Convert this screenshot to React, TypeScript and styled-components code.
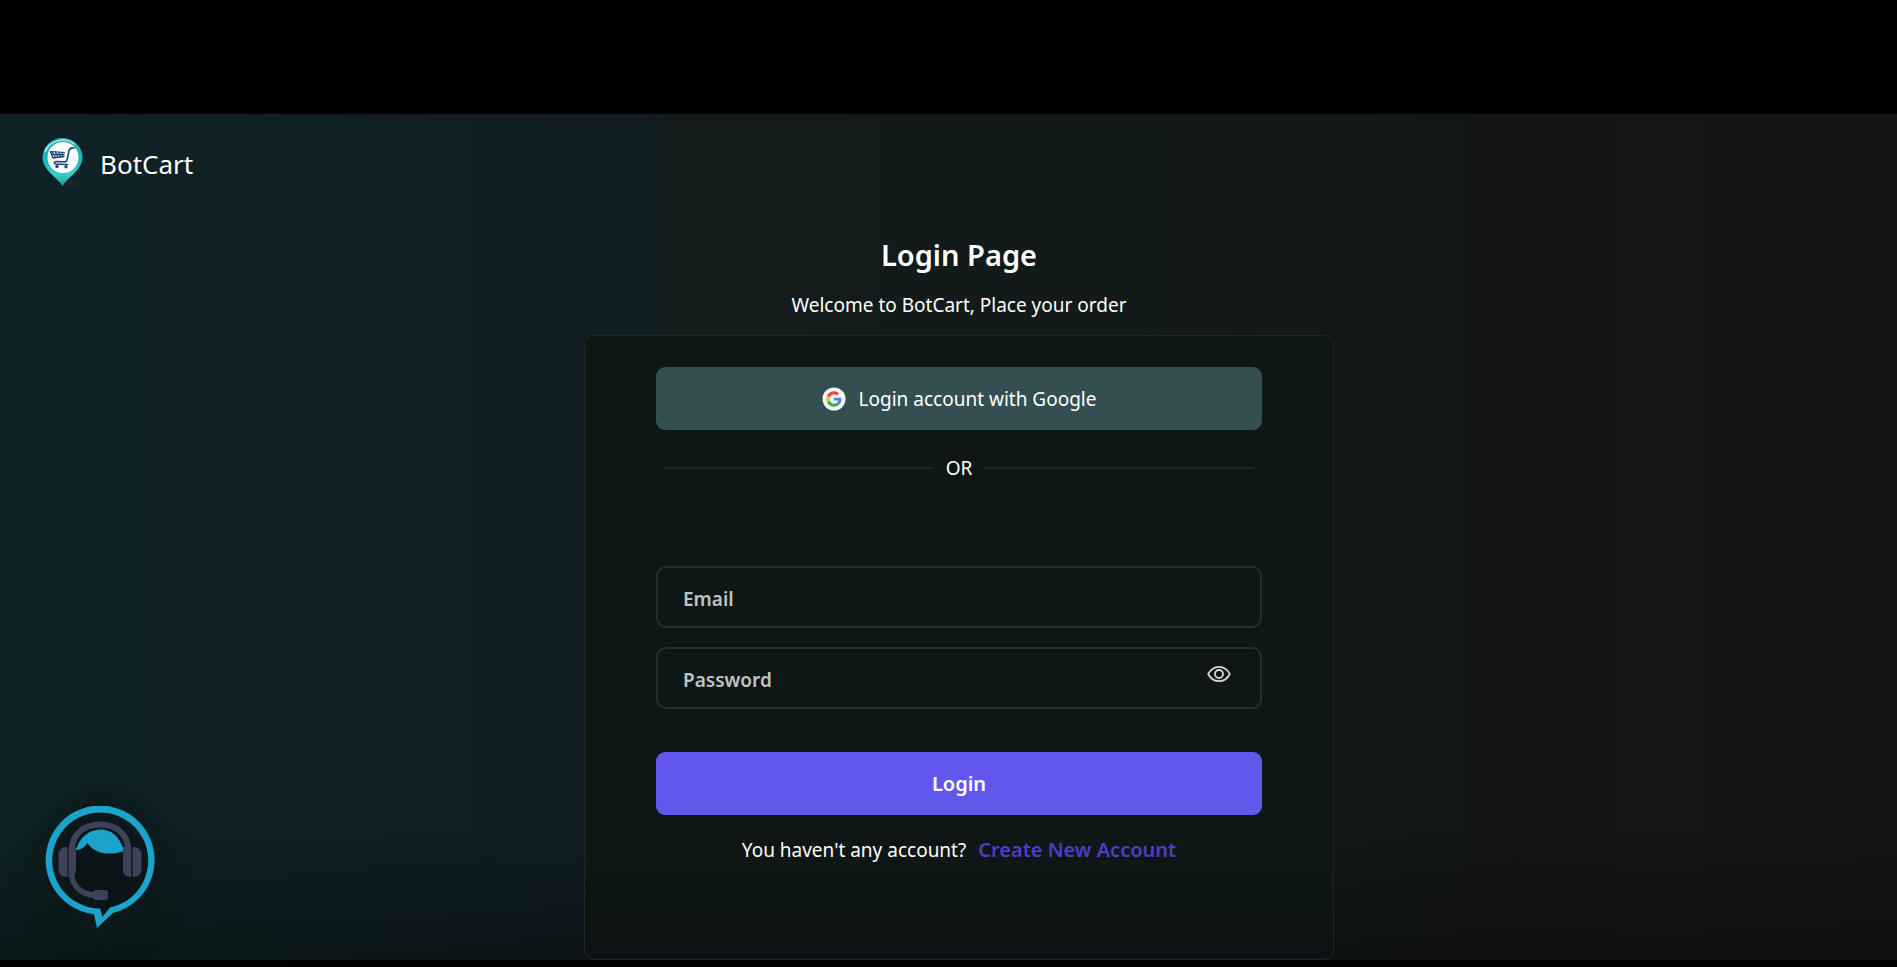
import React, { useState } from "react";
import styled, { createGlobalStyle } from "styled-components";

const GlobalStyle = createGlobalStyle`
  *, *::before, *::after { box-sizing: border-box; }
  body {
    margin: 0;
    background: #000;
    color: #fff;
    font-family: "Noto Sans", "Open Sans", sans-serif;
    font-size: 19px;
    line-height: 28px;
  }
  button, input { font: inherit; color: inherit; }
`;

const Frame = styled.div`
  display: flex;
  flex-direction: column;
  min-height: 100vh;
  padding: 114px 0 7px;
  background: #000;
`;

const Screen = styled.div`
  position: relative;
  flex: 1;
  display: flex;
  flex-direction: column;
  background:
    linear-gradient(to bottom, rgba(0, 0, 0, 0) 84%, rgba(0, 0, 0, 0.3) 100%),
    linear-gradient(to right, #0e2225 0%, #0f2024 16%, #101d23 34%, #121d1c 35%, #121a1a 58%, #141616 80%, #161515 100%);
`;

const Header = styled.header`
  padding: 24px 40px 0;
`;

const Brand = styled.a`
  display: inline-flex;
  align-items: center;
  gap: 12px;
  color: #fff;
  font-size: 26px;
  line-height: 52px;
  text-decoration: none;
`;

const Main = styled.main`
  flex: 1;
  display: flex;
  flex-direction: column;
  align-items: center;
  padding: 35px 0 0 21px;
`;

const Title = styled.h1`
  margin: 0;
  font-size: 29px;
  font-weight: 600;
  line-height: 46px;
`;

const Subtitle = styled.p`
  margin: 13px 0 16px;
`;

const Card = styled.section`
  flex: 1;
  width: 100%;
  max-width: 750px;
  padding: 31px 71px 84px;
  border: 1px solid #202727;
  border-radius: 10px;
  background: linear-gradient(to bottom, #0f1716 0%, #0f1716 84%, #0c1213 100%);
`;

const Button = styled.button<{ $tone: "google" | "primary" }>`
  display: flex;
  align-items: center;
  justify-content: center;
  gap: 13px;
  width: 100%;
  height: 63px;
  padding: 0;
  border: 0;
  border-radius: 9px;
  background: ${({ $tone }) => ($tone === "google" ? "#344f52" : "#6157ed")};
  font-size: ${({ $tone }) => ($tone === "google" ? 19 : 20)}px;
  font-weight: ${({ $tone }) => ($tone === "google" ? 400 : 600)};
  cursor: pointer;
`;

const Divider = styled.div`
  display: flex;
  align-items: center;
  gap: 13px;
  margin: 24px 8px 84px;

  &::before,
  &::after {
    content: "";
    flex: 1;
    height: 2px;
    background: #1b2323;
  }
`;

const Form = styled.form`
  display: flex;
  flex-direction: column;
  gap: 19px;
`;

const Field = styled.div`
  position: relative;
`;

const Label = styled.label`
  position: absolute;
  top: 19px;
  left: 27px;
  color: #bfc3c3;
  font-weight: 600;
  pointer-events: none;
`;

const Input = styled.input`
  display: block;
  width: 100%;
  height: 62px;
  padding: 0 70px 0 25px;
  border: 2px solid #262d2e;
  border-radius: 10px;
  outline: none;
  background: transparent;
  font-weight: 600;

  &:not(:placeholder-shown) + ${Label} {
    display: none;
  }
`;

const EyeButton = styled.button`
  position: absolute;
  top: 17px;
  right: 30px;
  display: flex;
  padding: 0;
  border: 0;
  background: none;
  color: #d5d8d8;
  cursor: pointer;
`;

const Submit = styled(Button)`
  margin-top: 24px;
`;

const SignUp = styled.p`
  display: flex;
  justify-content: center;
  align-items: baseline;
  gap: 12px;
  margin: 21px 0 0;

  a {
    color: #4a3dc9;
    font-size: 20px;
    font-weight: 600;
    text-decoration: none;
  }
`;

const ChatButton = styled.button`
  position: absolute;
  left: 45px;
  bottom: 30px;
  display: flex;
  padding: 0;
  border: 0;
  border-radius: 50%;
  background: radial-gradient(circle, #0a1417 30%, #0c1919 70%);
  box-shadow: 0 0 24px 8px #0c1919;
  cursor: pointer;
`;

function PinLogo() {
  return (
    <svg width="48" height="52" viewBox="0 0 48 52" aria-hidden="true">
      <defs>
        <linearGradient id="pin" x1="0" y1="0" x2="0" y2="1">
          <stop offset="0" stopColor="#2aa9ad" />
          <stop offset="0.5" stopColor="#19bcc0" />
          <stop offset="0.75" stopColor="#3ccfca" />
          <stop offset="1" stopColor="#129da3" />
        </linearGradient>
      </defs>
      <ellipse cx="30" cy="46" rx="10" ry="4" fill="#1d2427" />
      <path d="M22.500 48C18 40 2.500 32 2.500 19.500a20 19.500 0 0 1 40 0C42.500 32 27 40 22.500 48z" fill="url(#pin)" />
      <path d="M5 14a18.500 17 0 0 1 30-7.500" fill="none" stroke="#a8e6e6" strokeWidth="1.500" />
      <circle cx="23" cy="19.500" r="15.500" fill="#fff" />
      <g fill="none" stroke="#1d4777" strokeLinecap="round" strokeLinejoin="round">
        <path d="M34 10c-3-.6-4.500.6-5 3l-2 9c-.3 1.400-1.300 2-2.800 1.800L16 23.500c-2 0-2.200 2.300-.4 2.500l12 .5" strokeWidth="1.600" />
        <path d="M10.500 13.500l2.500 6.500 11-1.500" strokeWidth="1.500" />
        <path d="M11 13.500l13.500 1" strokeWidth="1.100" />
        <path d="M12.500 14l3 5.500M15.500 14l2.500 5M19 14.500l1.500 4.500M22 14.500l.5 4M12 16.500h12" strokeWidth="1.300" />
      </g>
      <circle cx="17" cy="28.500" r="1.700" fill="#1d4777" />
      <circle cx="26" cy="28.800" r="1.700" fill="#1d4777" />
    </svg>
  );
}

function GoogleIcon() {
  return (
    <svg width="24" height="24" viewBox="0 0 25 25" aria-hidden="true">
      <circle cx="12.500" cy="12.500" r="12" fill="#f4f5f5" />
      <g transform="translate(4.500 4.500) scale(0.333)">
        <path fill="#e9453c" d="M24 9.500c3.540 0 6.710 1.220 9.210 3.600l6.850-6.850C35.900 2.380 30.470 0 24 0 14.620 0 6.510 5.380 2.560 13.220l7.980 6.190C12.430 13.720 17.740 9.500 24 9.500z" />
        <path fill="#4c86ee" d="M46.980 24.550c0-1.570-.15-3.090-.38-4.550H24v9.020h12.940c-.58 2.960-2.260 5.480-4.780 7.180l7.730 6c4.510-4.180 7.090-10.360 7.090-17.650z" />
        <path fill="#f6bb1c" d="M10.530 28.590c-.48-1.450-.76-2.990-.76-4.590s.27-3.140.76-4.590l-7.980-6.190C.92 16.460 0 20.120 0 24c0 3.880.92 7.540 2.560 10.780l7.970-6.190z" />
        <path fill="#38ab58" d="M24 48c6.480 0 11.930-2.130 15.890-5.810l-7.730-6c-2.150 1.450-4.920 2.300-8.160 2.300-6.260 0-11.570-4.220-13.470-9.910l-7.980 6.190C6.510 42.620 14.620 48 24 48z" />
      </g>
    </svg>
  );
}

function EyeIcon() {
  return (
    <svg width="26" height="20" viewBox="0 0 26 20" fill="none" stroke="currentColor" strokeWidth="1.800" aria-hidden="true">
      <path d="M2.200 10C4.500 5.500 8.200 2.800 13 2.800S21.500 5.500 23.800 10C21.500 14.500 17.800 17.200 13 17.200S4.500 14.500 2.200 10z" strokeLinejoin="round" />
      <circle cx="13" cy="10" r="4" />
    </svg>
  );
}

function SupportIcon() {
  return (
    <svg width="111" height="124" viewBox="0 0 111 124" aria-hidden="true">
      <path
        d="M49 108.200A54.500 54.500 0 1 1 68 107L52 122zM55 102.500L57.500 111L65 101.500A48 48 0 1 0 55 102.500z"
        fill="#1ba3cb"
        fillRule="evenodd"
      />
      <path d="M31 44C34 32 44 23.500 55.500 23.500S75 31 79 45C66 50 49 48 42.500 37C40 41 36 44 31 44z" fill="#1ba3cb" />
      <g fill="#3d4258">
        <path d="M22.500 41v30q-9 0-9-8V49q0-8 9-8z" />
        <path d="M24 41h7v22q0 7-7 8z" />
        <path d="M78 41h8v30q-8 0-8-7V41z" />
        <path d="M87.500 41q9 0 9 8v14q0 8-9 8z" />
        <rect x="48" y="84" width="15" height="10" rx="3" />
      </g>
      <path d="M26.500 70V46C26.500 28 39 18.500 55 18.500S83.500 28 83.500 46" fill="none" stroke="#3d4258" strokeWidth="6" />
      <path d="M26.500 68C28 81 37 89 50 89" fill="none" stroke="#3d4258" strokeWidth="5.500" />
    </svg>
  );
}

export default function App() {
  const [visible, setVisible] = useState(false);

  return (
    <Frame>
      <GlobalStyle />
      <Screen>
        <Header>
          <Brand href="#">
            <PinLogo />
            BotCart
          </Brand>
        </Header>
        <Main>
          <Title>Login Page</Title>
          <Subtitle>Welcome to BotCart, Place your order</Subtitle>
          <Card>
            <Button type="button" $tone="google">
              <GoogleIcon />
              Login account with Google
            </Button>
            <Divider>OR</Divider>
            <Form onSubmit={(e) => e.preventDefault()}>
              <Field>
                <Input id="email" type="email" placeholder=" " />
                <Label htmlFor="email">Email</Label>
              </Field>
              <Field>
                <Input id="password" type={visible ? "text" : "password"} placeholder=" " />
                <Label htmlFor="password">Password</Label>
                <EyeButton type="button" aria-label="Show password" onClick={() => setVisible(!visible)}>
                  <EyeIcon />
                </EyeButton>
              </Field>
              <Submit type="submit" $tone="primary">
                Login
              </Submit>
            </Form>
            <SignUp>
              You haven't any account? <a href="#">Create New Account</a>
            </SignUp>
          </Card>
        </Main>
        <ChatButton type="button" aria-label="Open support chat">
          <SupportIcon />
        </ChatButton>
      </Screen>
    </Frame>
  );
}
